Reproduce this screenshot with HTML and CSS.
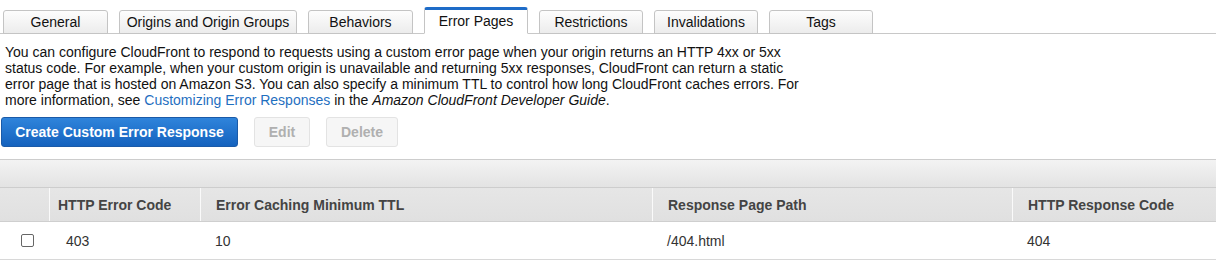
FILE: index.html
```html
<!DOCTYPE html>
<html>
<head>
<meta charset="utf-8">
<link rel="stylesheet" href="styles.css">
</head>
<body>
<div class="page">
  <div class="tabs">
    <div class="tab">General</div>
    <div class="tab wide">Origins and Origin Groups</div>
    <div class="tab">Behaviors</div>
    <div class="tab active">Error Pages</div>
    <div class="tab">Restrictions</div>
    <div class="tab">Invalidations</div>
    <div class="tab">Tags</div>
  </div>
  <p class="desc">You can configure CloudFront to respond to requests using a custom error page when your origin returns an HTTP 4xx or 5xx status code. For example, when your custom origin is unavailable and returning 5xx responses, CloudFront can return a static error page that is hosted on Amazon S3. You can also specify a minimum TTL to control how long CloudFront caches errors. For more information, see <a class="link">Customizing Error Responses</a> in the <i>Amazon CloudFront Developer Guide</i>.</p>
  <div class="actions">
    <button class="btn primary">Create Custom Error Response</button>
    <button class="btn disabled edit">Edit</button>
    <button class="btn disabled delete">Delete</button>
  </div>
  <div class="grid">
    <div class="band"></div>
    <div class="row head">
      <div class="c c0"></div>
      <div class="c c1">HTTP Error Code</div>
      <div class="c c2">Error Caching Minimum TTL</div>
      <div class="c c3">Response Page Path</div>
      <div class="c c4">HTTP Response Code</div>
    </div>
    <div class="row data">
      <div class="c c0"><span class="cb"></span></div>
      <div class="c c1">403</div>
      <div class="c c2">10</div>
      <div class="c c3">/404.html</div>
      <div class="c c4">404</div>
    </div>
  </div>
</div>
</body>
</html>
```
FILE: styles.css
```css
* { box-sizing: border-box; }
html, body { margin: 0; padding: 0; background: #fff; }
body { font-family: Arial, "Liberation Sans", sans-serif; font-size: 14px; color: #000; }
.page { width: 1216px; height: 271px; overflow: hidden; }

.tabs {
  display: flex;
  align-items: flex-end;
  gap: 11px;
  padding: 7px 0 0 3px;
  height: 34px;
  border-bottom: 1px solid #c8c8c8;
}
.tab {
  height: 24px;
  width: 104px;
  padding: 0 6px;
  margin-bottom: -1px;
  border: 1px solid #c4c4c4;
  border-radius: 3px 3px 0 0;
  background: linear-gradient(#fdfdfd, #ececec);
  color: #111;
  font-size: 14px;
  line-height: 22px;
  text-align: center;
  white-space: nowrap;
}
.tab:nth-child(1), .tab:nth-child(3) { width: 105px; }
.tab.wide { width: 178px; }
.tab.active {
  height: 27px;
  width: 104px;
  background: #fff;
  border-color: #c4c4c4;
  border-bottom-color: #fff;
  border-top: 3px solid #1e6cc8;
  line-height: 22px;
}

.desc {
  margin: 10px 0 0 5px;
  width: 810px;
  line-height: 16px;
  font-size: 14px;
  color: #111;
}
.link { color: #1f6fbf; }

.actions {
  display: flex;
  gap: 16px;
  margin-top: 9px;
  padding-left: 1px;
}
.btn {
  height: 30px;
  font-family: Arial, "Liberation Sans", sans-serif;
  font-size: 14px;
  font-weight: bold;
  border-radius: 3px;
  padding: 0;
  white-space: nowrap;
  text-align: center;
}
.btn.primary {
  width: 237px;
  color: #fff;
  background: linear-gradient(#2f84db, #1462be);
  border: 1px solid #1a5aa8;
}
.btn.disabled {
  color: #b0b0b0;
  background: #f6f6f6;
  border: 1px solid #e3e3e3;
}
.btn.edit { width: 56px; }
.btn.delete { width: 72px; }

.grid {
  margin-top: 12px;
}
.band {
  height: 29px;
  border-top: 1px solid #cdcdcd;
  border-bottom: 1px solid #cdcdcd;
  background: linear-gradient(#f3f3f3, #e3e3e3);
}
.row { display: flex; }
.row.head {
  height: 34px;
  background: linear-gradient(#e6e6e6, #e0e0e0);
  border-bottom: 1px solid #cfcfcf;
  font-weight: bold;
  color: #444;
}
.row.data {
  height: 38px;
  border-bottom: 1px solid #d8d8d8;
  color: #333;
}
.c { display: flex; align-items: center; padding-left: 15px; }
.head .c { border-left: 1px solid #fafafa; }
.head .c0 { border-left: none; }
.head .c1 { padding-left: 8px; }
.c0 { width: 49px; }
.c1 { width: 151px; }
.c2 { width: 452px; }
.c3 { width: 360px; }
.c4 { flex: 1; }
.data .c1 { padding-left: 17px; }
.data .c0 { padding-left: 21px; }
.cb {
  display: block;
  width: 13px;
  height: 13px;
  border: 1px solid #666;
  border-radius: 2px;
  background: #fff;
}
```
